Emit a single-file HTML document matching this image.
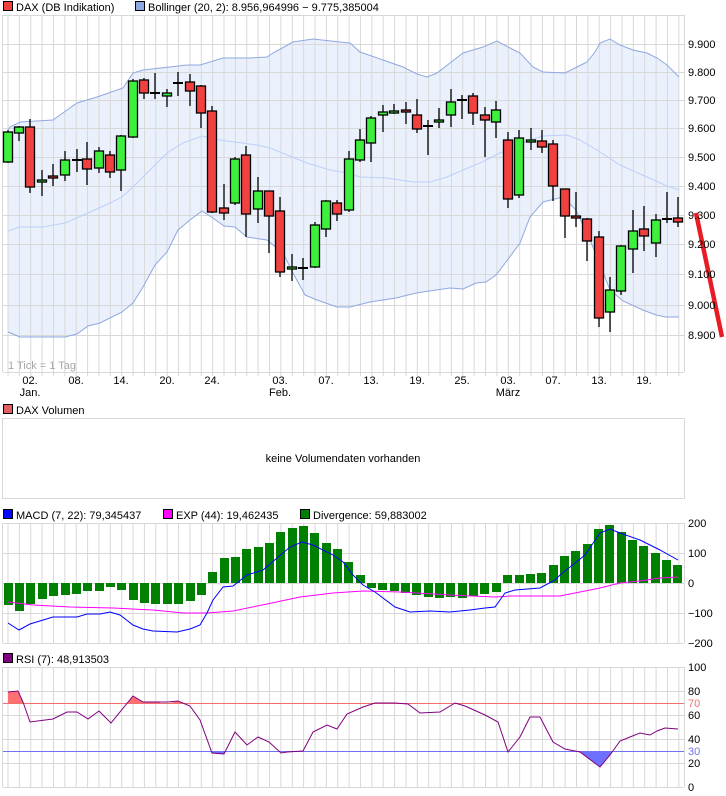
<!DOCTYPE html>
<html><head><meta charset="utf-8"><style>
html,body{margin:0;padding:0;background:#fff;width:726px;height:796px;overflow:hidden}
svg{display:block}
text{font-family:"Liberation Sans",Arial,sans-serif;font-size:11px;fill:#000}
</style></head><body>
<svg width="726" height="796" viewBox="0 0 726 796" xmlns="http://www.w3.org/2000/svg">
<defs>
<pattern id="vg" patternUnits="userSpaceOnUse" x="7.5" y="0" width="11.37" height="10"><rect x="0" y="0" width="1" height="10" fill="#d8d8d8"/></pattern>
</defs>
<rect width="726" height="796" fill="#fff"/>

<rect x="3.5" y="1.5" width="9" height="9" fill="#f04040" stroke="#000"/>
<text x="16" y="11">DAX (DB Indikation)</text>
<rect x="135.5" y="1.5" width="9" height="9" fill="#90a8e0" stroke="#000"/>
<text x="148" y="11">Bollinger (20, 2): 8.956,964996 − 9.775,385004</text>

<polygon fill="#eaf1fd" points="8,130 10,127 20,122 53,120 60,115 77,103 97,97 123,88 133,73 143,70 187,65 200,65 223,58 250,58 267,57 273,53 293,42 313,39 340,42 350,43 360,52 383,60 403,67 417,74 427,77 437,73 450,63 463,53 483,47 497,41 510,48 520,53 533,67 543,72 565,73 577,67 587,62 595,52 600,43 610,39 620,45 633,50 647,53 657,58 667,65 679,77 679,317 666,317 656,315 643,310 623,301 610,290 593,247 576,210 563,197 543,202 530,217 520,243 506,262 496,275 486,282 476,283 463,289 450,288 416,293 396,298 370,302 350,307 337,307 317,300 305,295 293,273 283,253 267,240 260,239 247,237 235,227 224,226 213,218 202,211 190,220 178,230 167,252 155,265 143,287 133,303 122,312 100,323 88,326 77,334 65,337 20,337 8,332"/>
<rect x="3" y="15" width="681" height="361" fill="url(#vg)"/>
<g stroke="#d8d8d8" stroke-width="1">
<line x1="3" y1="15.5" x2="684" y2="15.5"/>
<line x1="3" y1="44.5" x2="684" y2="44.5"/>
<line x1="3" y1="72.5" x2="684" y2="72.5"/>
<line x1="3" y1="100.5" x2="684" y2="100.5"/>
<line x1="3" y1="128.5" x2="684" y2="128.5"/>
<line x1="3" y1="157.5" x2="684" y2="157.5"/>
<line x1="3" y1="186.5" x2="684" y2="186.5"/>
<line x1="3" y1="215.5" x2="684" y2="215.5"/>
<line x1="3" y1="244.5" x2="684" y2="244.5"/>
<line x1="3" y1="274.5" x2="684" y2="274.5"/>
<line x1="3" y1="305.5" x2="684" y2="305.5"/>
<line x1="3" y1="335.5" x2="684" y2="335.5"/>
<line x1="3" y1="372.5" x2="684" y2="372.5"/>
<line x1="2.5" y1="15" x2="2.5" y2="372"/>
<line x1="684.5" y1="15" x2="684.5" y2="372"/>
</g>
<polyline fill="none" stroke="#8fa8e0" stroke-width="1" points="8,130 10,127 20,122 53,120 60,115 77,103 97,97 123,88 133,73 143,70 187,65 200,65 223,58 250,58 267,57 273,53 293,42 313,39 340,42 350,43 360,52 383,60 403,67 417,74 427,77 437,73 450,63 463,53 483,47 497,41 510,48 520,53 533,67 543,72 565,73 577,67 587,62 595,52 600,43 610,39 620,45 633,50 647,53 657,58 667,65 679,77"/>
<polyline fill="none" stroke="#8fa8e0" stroke-width="1" points="8,332 20,337 65,337 77,334 88,326 100,323 122,312 133,303 143,287 155,265 167,252 178,230 190,220 202,211 213,218 224,226 235,227 247,237 260,239 267,240 283,253 293,273 305,295 317,300 337,307 350,307 370,302 396,298 416,293 450,288 463,289 476,283 486,282 496,275 506,262 520,243 530,217 543,202 563,197 576,210 593,247 610,290 623,301 643,310 656,315 666,317 679,317"/>
<polyline fill="none" stroke="#bcd0f8" stroke-width="1" points="8,231 20,227 43,227 65,223 88,213 110,203 122,197 133,187 140,180 167,153 183,143 202,136 220,140 257,145 270,148 307,163 330,170 347,173 360,177 387,178 413,182 430,182 447,177 463,170 480,163 500,153 530,140 543,136 567,135 580,140 597,150 620,165 647,177 667,186 679,190"/>

<g stroke="#000" stroke-width="1.3">
<line x1="8" y1="130" x2="8" y2="163"/><rect x="3.5" y="132" width="9" height="30" fill="#3cf03c"/>
<line x1="19" y1="126" x2="19" y2="141"/><rect x="14.5" y="127" width="9" height="6" fill="#3cf03c"/>
<line x1="30" y1="119" x2="30" y2="193"/><rect x="25.5" y="127" width="9" height="60" fill="#f04040"/>
<line x1="42" y1="170" x2="42" y2="196"/><rect x="37.5" y="180" width="9" height="2" fill="#3cf03c"/>
<line x1="53" y1="164" x2="53" y2="186"/><rect x="48.5" y="176" width="9" height="2" fill="#f04040"/>
<line x1="65" y1="151" x2="65" y2="181"/><rect x="60.5" y="160" width="9" height="15" fill="#3cf03c"/>
<line x1="77" y1="149" x2="77" y2="172"/><line x1="72" y1="160" x2="82" y2="160" stroke-width="2"/>
<line x1="87" y1="142" x2="87" y2="185"/><rect x="82.5" y="159" width="9" height="10" fill="#f04040"/>
<line x1="99" y1="147" x2="99" y2="173"/><rect x="94.5" y="151" width="9" height="17" fill="#3cf03c"/>
<line x1="110" y1="151" x2="110" y2="178"/><rect x="105.5" y="155" width="9" height="17" fill="#f04040"/>
<line x1="121" y1="135" x2="121" y2="191"/><rect x="116.5" y="136" width="9" height="34" fill="#3cf03c"/>
<line x1="133" y1="79" x2="133" y2="138"/><rect x="128.5" y="81" width="9" height="56" fill="#3cf03c"/>
<line x1="144" y1="78" x2="144" y2="99"/><rect x="139.5" y="80" width="9" height="13" fill="#f04040"/>
<line x1="155" y1="73" x2="155" y2="99"/><line x1="150" y1="93" x2="160" y2="93" stroke-width="2"/>
<line x1="167" y1="89" x2="167" y2="107"/><rect x="162.5" y="93" width="9" height="3" fill="#3cf03c"/>
<line x1="178" y1="72" x2="178" y2="96"/><line x1="173" y1="83" x2="183" y2="83" stroke-width="2"/>
<line x1="190" y1="74" x2="190" y2="106"/><rect x="185.5" y="82" width="9" height="9" fill="#f04040"/>
<line x1="201" y1="85" x2="201" y2="128"/><rect x="196.5" y="86" width="9" height="27" fill="#f04040"/>
<line x1="212" y1="106" x2="212" y2="213"/><rect x="207.5" y="111" width="9" height="101" fill="#f04040"/>
<line x1="224" y1="184" x2="224" y2="220"/><rect x="219.5" y="208" width="9" height="5" fill="#f04040"/>
<line x1="235" y1="157" x2="235" y2="205"/><rect x="230.5" y="159" width="9" height="44" fill="#3cf03c"/>
<line x1="246" y1="146" x2="246" y2="237"/><rect x="241.5" y="155" width="9" height="59" fill="#f04040"/>
<line x1="258" y1="177" x2="258" y2="223"/><rect x="253.5" y="191" width="9" height="18" fill="#3cf03c"/>
<line x1="269" y1="191" x2="269" y2="253"/><rect x="264.5" y="191" width="9" height="25" fill="#f04040"/>
<line x1="280" y1="197" x2="280" y2="277"/><rect x="275.5" y="211" width="9" height="61" fill="#f04040"/>
<line x1="292" y1="254" x2="292" y2="281"/><rect x="287.5" y="267" width="9" height="2" fill="#3cf03c"/>
<line x1="303" y1="258" x2="303" y2="280"/><line x1="298" y1="268" x2="308" y2="268" stroke-width="2"/>
<line x1="315" y1="222" x2="315" y2="268"/><rect x="310.5" y="225" width="9" height="42" fill="#3cf03c"/>
<line x1="326" y1="200" x2="326" y2="237"/><rect x="321.5" y="201" width="9" height="28" fill="#3cf03c"/>
<line x1="337" y1="200" x2="337" y2="221"/><rect x="332.5" y="203" width="9" height="11" fill="#f04040"/>
<line x1="349" y1="151" x2="349" y2="212"/><rect x="344.5" y="159" width="9" height="51" fill="#3cf03c"/>
<line x1="360" y1="129" x2="360" y2="162"/><rect x="355.5" y="140" width="9" height="20" fill="#3cf03c"/>
<line x1="371" y1="116" x2="371" y2="162"/><rect x="366.5" y="118" width="9" height="25" fill="#3cf03c"/>
<line x1="383" y1="105" x2="383" y2="132"/><rect x="378.5" y="112" width="9" height="3" fill="#3cf03c"/>
<line x1="394" y1="104" x2="394" y2="114"/><rect x="389.5" y="111" width="9" height="2" fill="#3cf03c"/>
<line x1="406" y1="102" x2="406" y2="124"/><rect x="401.5" y="110" width="9" height="2" fill="#f04040"/>
<line x1="417" y1="99" x2="417" y2="133"/><rect x="412.5" y="115" width="9" height="14" fill="#f04040"/>
<line x1="428" y1="120" x2="428" y2="155"/><line x1="423" y1="126" x2="433" y2="126" stroke-width="2"/>
<line x1="439" y1="108" x2="439" y2="128"/><rect x="434.5" y="120" width="9" height="2" fill="#3cf03c"/>
<line x1="451" y1="89" x2="451" y2="127"/><rect x="446.5" y="102" width="9" height="13" fill="#3cf03c"/>
<line x1="462" y1="95" x2="462" y2="119"/><line x1="457" y1="100" x2="467" y2="100" stroke-width="2"/>
<line x1="473" y1="93" x2="473" y2="125"/><rect x="468.5" y="96" width="9" height="17" fill="#f04040"/>
<line x1="485" y1="107" x2="485" y2="157"/><rect x="480.5" y="115" width="9" height="5" fill="#f04040"/>
<line x1="496" y1="101" x2="496" y2="138"/><rect x="491.5" y="110" width="9" height="12" fill="#3cf03c"/>
<line x1="508" y1="132" x2="508" y2="208"/><rect x="503.5" y="140" width="9" height="59" fill="#f04040"/>
<line x1="519" y1="130" x2="519" y2="198"/><rect x="514.5" y="138" width="9" height="57" fill="#3cf03c"/>
<line x1="531" y1="128" x2="531" y2="150"/><rect x="526.5" y="140" width="9" height="2" fill="#3cf03c"/>
<line x1="542" y1="130" x2="542" y2="153"/><rect x="537.5" y="141" width="9" height="6" fill="#f04040"/>
<line x1="553" y1="140" x2="553" y2="201"/><rect x="548.5" y="144" width="9" height="42" fill="#f04040"/>
<line x1="565" y1="189" x2="565" y2="238"/><rect x="560.5" y="189" width="9" height="27" fill="#f04040"/>
<line x1="576" y1="192" x2="576" y2="227"/><rect x="571.5" y="216" width="9" height="2" fill="#f04040"/>
<line x1="587" y1="218" x2="587" y2="261"/><rect x="582.5" y="219" width="9" height="22" fill="#f04040"/>
<line x1="599" y1="231" x2="599" y2="327"/><rect x="594.5" y="237" width="9" height="81" fill="#f04040"/>
<line x1="610" y1="277" x2="610" y2="332"/><rect x="605.5" y="290" width="9" height="22" fill="#3cf03c"/>
<line x1="621" y1="245" x2="621" y2="295"/><rect x="616.5" y="246" width="9" height="45" fill="#3cf03c"/>
<line x1="633" y1="210" x2="633" y2="273"/><rect x="628.5" y="231" width="9" height="18" fill="#3cf03c"/>
<line x1="644" y1="206" x2="644" y2="251"/><rect x="639.5" y="229" width="9" height="7" fill="#f04040"/>
<line x1="656" y1="214" x2="656" y2="257"/><rect x="651.5" y="220" width="9" height="23" fill="#3cf03c"/>
<line x1="667" y1="192" x2="667" y2="223"/><line x1="662" y1="219" x2="672" y2="219" stroke-width="2"/>
<line x1="678" y1="197" x2="678" y2="227"/><rect x="673.5" y="218" width="9" height="4" fill="#f04040"/>
</g>

<line x1="696" y1="213" x2="722" y2="337" stroke="#e81c24" stroke-width="4.5"/>

<g>
<text x="688" y="48">9.900</text>
<text x="688" y="76">9.800</text>
<text x="688" y="104">9.700</text>
<text x="688" y="132">9.600</text>
<text x="688" y="161">9.500</text>
<text x="688" y="190">9.400</text>
<text x="688" y="219">9.300</text>
<text x="688" y="248">9.200</text>
<text x="688" y="278">9.100</text>
<text x="688" y="309">9.000</text>
<text x="688" y="339">8.900</text>
</g>
<text x="8" y="369" style="fill:#a8a8a8;font-size:11px">1 Tick = 1 Tag</text>
<g text-anchor="middle">
<text x="30" y="384">02.</text><text x="30" y="396">Jan.</text>
<text x="76" y="384">08.</text>
<text x="121" y="384">14.</text>
<text x="167" y="384">20.</text>
<text x="212" y="384">24.</text>
<text x="280" y="384">03.</text><text x="280" y="396">Feb.</text>
<text x="326" y="384">07.</text>
<text x="371" y="384">13.</text>
<text x="417" y="384">19.</text>
<text x="462" y="384">25.</text>
<text x="508" y="384">03.</text><text x="508" y="396">März</text>
<text x="553" y="384">07.</text>
<text x="599" y="384">13.</text>
<text x="644" y="384">19.</text>
</g>

<rect x="3.5" y="404.5" width="9" height="9" fill="#e06060" stroke="#000"/>
<text x="16" y="414">DAX Volumen</text>
<rect x="2.5" y="418.5" width="682" height="80" fill="#fff" stroke="#d8d8d8"/>
<text x="343" y="462" text-anchor="middle">keine Volumendaten vorhanden</text>

<rect x="3.5" y="509.5" width="9" height="9" fill="#0000ff" stroke="#000"/>
<text x="16" y="519">MACD (7, 22): 79,345437</text>
<rect x="163.5" y="509.5" width="9" height="9" fill="#ff00ff" stroke="#000"/>
<text x="176" y="519">EXP (44): 19,462435</text>
<rect x="300.5" y="509.5" width="9" height="9" fill="#008000" stroke="#000"/>
<text x="313" y="519">Divergence: 59,883002</text>

<rect x="3" y="523" width="681" height="121" fill="url(#vg)"/>
<g stroke="#d8d8d8">
<line x1="3" y1="523.5" x2="684" y2="523.5"/>
<line x1="3" y1="553.5" x2="684" y2="553.5"/>
<line x1="3" y1="583.5" x2="684" y2="583.5"/>
<line x1="3" y1="613.5" x2="684" y2="613.5"/>
<line x1="3" y1="643.5" x2="684" y2="643.5"/>
<line x1="2.5" y1="523" x2="2.5" y2="643"/>
<line x1="684.5" y1="523" x2="684.5" y2="643"/>
</g>
<g fill="#008000">
<rect x="4" y="583" width="9" height="22"/><rect x="15" y="583" width="9" height="28"/><rect x="26" y="583" width="9" height="21"/><rect x="38" y="583" width="9" height="16"/><rect x="49" y="583" width="9" height="13"/><rect x="61" y="583" width="9" height="12"/><rect x="72" y="583" width="9" height="11"/><rect x="83" y="583" width="9" height="8"/><rect x="95" y="583" width="9" height="8"/><rect x="106" y="583" width="9" height="4"/><rect x="117" y="583" width="9" height="7"/><rect x="129" y="583" width="9" height="17"/><rect x="140" y="583" width="9" height="20"/><rect x="151" y="583" width="9" height="21"/><rect x="163" y="583" width="9" height="21"/><rect x="174" y="583" width="9" height="21"/><rect x="186" y="583" width="9" height="18"/><rect x="197" y="583" width="9" height="12"/>
<rect x="208" y="572" width="9" height="11"/><rect x="220" y="558" width="9" height="25"/><rect x="231" y="557" width="9" height="26"/><rect x="242" y="549" width="9" height="34"/><rect x="254" y="547" width="9" height="36"/><rect x="265" y="543" width="9" height="40"/><rect x="276" y="532" width="9" height="51"/><rect x="288" y="528" width="9" height="55"/><rect x="299" y="526" width="9" height="57"/><rect x="310" y="533" width="9" height="50"/><rect x="322" y="543" width="9" height="40"/><rect x="333" y="549" width="9" height="34"/><rect x="344" y="562" width="9" height="21"/><rect x="356" y="575" width="9" height="8"/>
<rect x="367" y="583" width="9" height="5"/><rect x="378" y="583" width="9" height="7"/><rect x="390" y="583" width="9" height="8"/><rect x="401" y="583" width="9" height="10"/><rect x="412" y="583" width="9" height="12"/><rect x="424" y="583" width="9" height="14"/><rect x="435" y="583" width="9" height="15"/><rect x="446" y="583" width="9" height="14"/><rect x="458" y="583" width="9" height="15"/><rect x="469" y="583" width="9" height="13"/><rect x="480" y="583" width="9" height="11"/><rect x="492" y="583" width="9" height="9"/>
<rect x="503" y="575" width="9" height="8"/><rect x="515" y="575" width="9" height="8"/><rect x="526" y="574" width="9" height="9"/><rect x="537" y="573" width="9" height="10"/><rect x="549" y="565" width="9" height="18"/><rect x="560" y="556" width="9" height="27"/><rect x="571" y="551" width="9" height="32"/><rect x="583" y="544" width="9" height="39"/><rect x="594" y="529" width="9" height="54"/><rect x="605" y="525" width="9" height="58"/><rect x="617" y="532" width="9" height="51"/><rect x="628" y="540" width="9" height="43"/><rect x="639" y="546" width="9" height="37"/><rect x="651" y="553" width="9" height="30"/><rect x="662" y="560" width="9" height="23"/><rect x="673" y="565" width="9" height="18"/>
</g>
<polyline fill="none" stroke="#ff00ff" stroke-width="1" points="8,602 33,605 70,607 113,608 153,610 183,613 207,613 233,611 267,604 300,597 333,593 363,591 400,592 450,595 495,597 510,596 560,596 600,588 620,583 640,581 660,578 678,577"/>
<polyline fill="none" stroke="#0000ff" stroke-width="1" points="8,623 19,630 30,624 53,617 77,617 87,614 100,614 110,612 120,615 133,625 143,629 153,631 177,632 190,629 200,625 207,613 213,600 223,587 233,586 247,575 263,570 277,558 290,547 302,542 313,545 333,555 343,562 353,575 363,585 375,592 395,607 410,612 430,611 450,612 470,610 485,608 495,607 505,593 515,590 540,588 555,580 560,575 570,567 585,555 600,533 610,529 620,533 640,540 660,550 678,560"/>
<text x="688" y="527">200</text>
<text x="688" y="557">100</text>
<text x="688" y="587">0</text>
<text x="688" y="617">−100</text>
<text x="688" y="647">−200</text>

<rect x="3.5" y="653.5" width="9" height="9" fill="#800080" stroke="#000"/>
<text x="16" y="663">RSI (7): 48,913503</text>
<rect x="3" y="667" width="681" height="121" fill="url(#vg)"/>
<g stroke="#d8d8d8">
<line x1="3" y1="667.5" x2="684" y2="667.5"/>
<line x1="3" y1="691.5" x2="684" y2="691.5"/>
<line x1="3" y1="715.5" x2="684" y2="715.5"/>
<line x1="3" y1="739.5" x2="684" y2="739.5"/>
<line x1="3" y1="763.5" x2="684" y2="763.5"/>
<line x1="3" y1="787.5" x2="684" y2="787.5"/>
<line x1="2.5" y1="667" x2="2.5" y2="787"/>
<line x1="684.5" y1="667" x2="684.5" y2="787"/>
</g>
<polygon fill="#ff7070" points="8,703 8,692 18,691 23,703"/>
<polygon fill="#ff7070" points="128,703 133,696 143,702 160,702 160,703"/>
<polygon fill="#ff7070" points="170,703 178,701 183,703"/>
<polygon fill="#7070ff" points="210,751 212,753 224,754 226,751"/>
<polygon fill="#7070ff" points="576,751 580,752 600,767 610,755 613,751"/>
<line x1="3" y1="703.5" x2="684" y2="703.5" stroke="#f07070"/>
<line x1="3" y1="751.5" x2="684" y2="751.5" stroke="#7070f0"/>
<polyline fill="none" stroke="#800080" stroke-width="1" points="8,692 18,691 23,702 30,722 53,719 67,712 77,712 88,719 99,711 111,723 133,696 143,702 160,702 168,702 178,701 190,706 200,720 212,753 224,754 235,732 247,745 258,737 269,742 281,753 287,752 303,751 313,732 327,725 337,729 347,714 363,707 375,703 395,703 408,704 420,713 440,712 455,703 465,706 485,715 498,722 508,752 520,737 530,717 540,717 553,742 565,749 580,752 600,767 610,755 620,741 630,737 640,733 650,735 657,731 665,728 678,729"/>
<text x="688" y="671">100</text>
<text x="688" y="695">80</text>
<text x="688" y="707" style="fill:#f07070">70</text>
<text x="688" y="719">60</text>
<text x="688" y="743">40</text>
<text x="688" y="755" style="fill:#7070f0">30</text>
<text x="688" y="767">20</text>
<text x="688" y="791">0</text>
</svg>
</body></html>
